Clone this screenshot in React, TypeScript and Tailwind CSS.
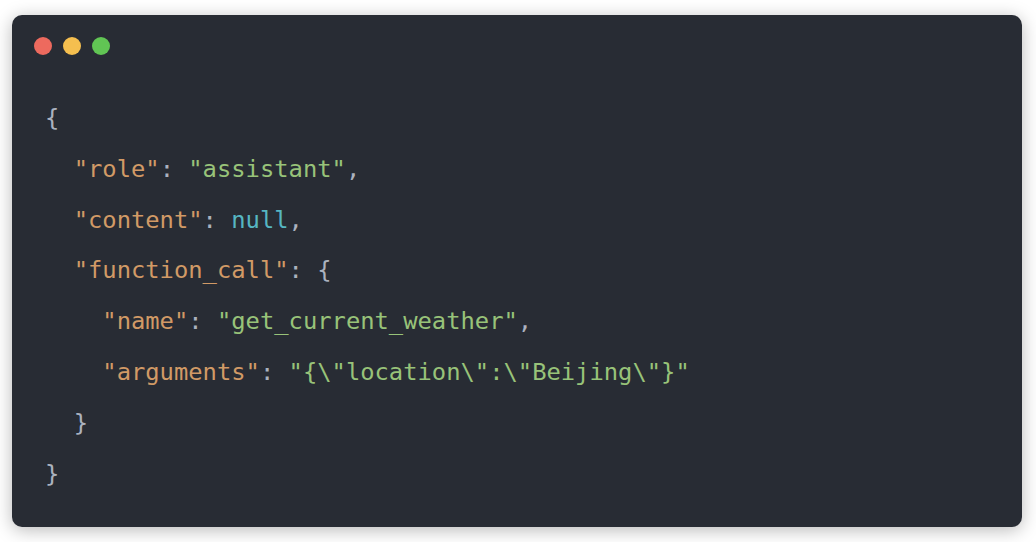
import React from 'react';

type Tok = { t: string; c: 'key' | 'str' | 'nul' | 'pun' };

const K = (t: string): Tok => ({ t, c: 'key' });
const S = (t: string): Tok => ({ t, c: 'str' });
const N = (t: string): Tok => ({ t, c: 'nul' });
const P = (t: string): Tok => ({ t, c: 'pun' });

const LINES: { indent: number; toks: Tok[] }[] = [
  { indent: 0, toks: [P('{')] },
  { indent: 1, toks: [K('"role"'), P(': '), S('"assistant"'), P(',')] },
  { indent: 1, toks: [K('"content"'), P(': '), N('null'), P(',')] },
  { indent: 1, toks: [K('"function_call"'), P(': {')] },
  { indent: 2, toks: [K('"name"'), P(': '), S('"get_current_weather"'), P(',')] },
  { indent: 2, toks: [K('"arguments"'), P(': '), S('"{\\"location\\":\\"Beijing\\"}"')] },
  { indent: 1, toks: [P('}')] },
  { indent: 0, toks: [P('}')] },
];

const color = (c: Tok['c']) =>
  c === 'key' ? 'text-[#d19a66]'
  : c === 'str' ? 'text-[#98c379]'
  : c === 'nul' ? 'text-[#56b6c2]'
  : 'text-[#abb2bf]';

export default function App() {
  return (
    <div className="min-h-screen w-full bg-white pt-[15px] pl-[12px]">
      <div className="w-[1010px] h-[512px] rounded-[10px] bg-[#282c34] shadow-[0_3px_18px_rgba(0,0,0,0.28)] flex flex-col">
        <div className="flex items-center gap-[11px] pl-[22px] pt-[22px]">
          <span className="w-[18px] h-[18px] rounded-full bg-[#ed6a5e]" />
          <span className="w-[18px] h-[18px] rounded-full bg-[#f5bf4f]" />
          <span className="w-[18px] h-[18px] rounded-full bg-[#61c554]" />
        </div>
        <pre className="mt-[38px] pl-[33px] font-['DejaVu_Sans_Mono',monospace] text-[23.8px] leading-[50.8px]">
          {LINES.map((line, i) => (
            <div key={i} className="whitespace-pre">
              {'  '.repeat(line.indent)}
              {line.toks.map((tok, j) => (
                <span key={j} className={color(tok.c)}>{tok.t}</span>
              ))}
            </div>
          ))}
        </pre>
      </div>
    </div>
  );
}
